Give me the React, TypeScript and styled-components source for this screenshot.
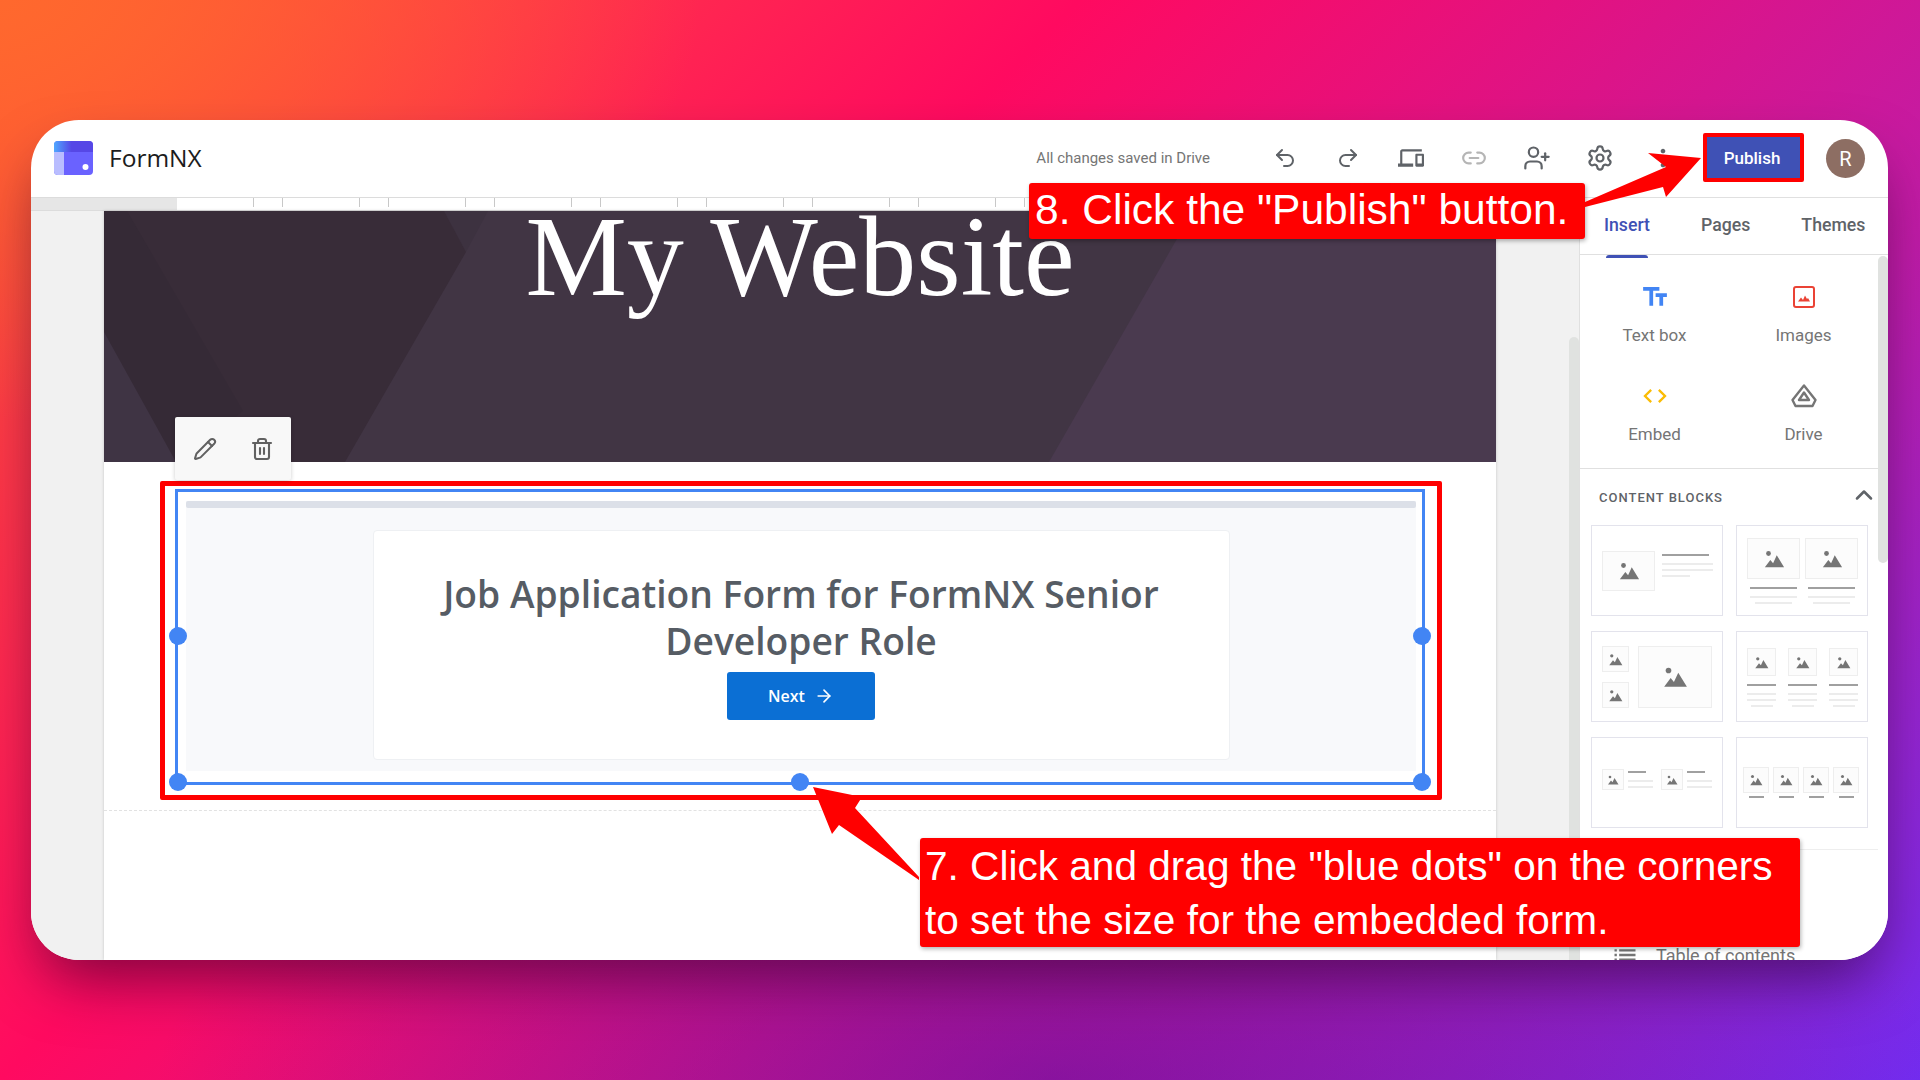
import styled, { createGlobalStyle } from "styled-components";
import { Undo2, Redo2, Link2, UserPlus, Settings, Pencil, Trash2, ChevronUp, ArrowRight } from "lucide-react";
import { MdDevices, MdTextFields, MdCode, MdList, MdMoreVert } from "react-icons/md";

const GlobalStyle = createGlobalStyle`
  html, body { margin: 0; padding: 0; }
  body { font-family: Roboto, "Liberation Sans", sans-serif; }
  * { box-sizing: border-box; }
`;

const Stage = styled.div`
  width: 1920px;
  height: 1080px;
  overflow: hidden;
  position: relative;
  padding: 120px 32px 120px 31px;
  background:
    radial-gradient(ellipse 700px 420px at 0% 0%, rgba(255,105,45,0.95), rgba(255,105,45,0) 100%),
    radial-gradient(ellipse 900px 320px at 55% 100%, rgba(80,10,150,0.5), rgba(80,10,150,0) 100%),
    linear-gradient(135deg, #ff5a35 0%, #ff0a60 36%, #c01ca8 72%, #732cf0 100%);
`;

const Window = styled.div`
  width: 100%;
  height: 100%;
  background: #fff;
  border-radius: 48px;
  overflow: hidden;
  display: flex;
  flex-direction: column;
  box-shadow: 0 30px 60px -12px rgba(40, 0, 40, 0.6);
`;

const TopBar = styled.header`
  height: 77px;
  flex: none;
  display: flex;
  align-items: center;
  padding: 0 0 2px 23px;
`;

const BrandName = styled.span`
  margin-left: 16px;
  font-family: "Open Sans", sans-serif;
  font-size: 24.5px;
  color: #1c1c1c;
`;

const SaveStatus = styled.span`
  margin-left: auto;
  padding-top: 1px;
  font-size: 15px;
  color: #757575;
`;

const IconRow = styled.div`
  display: flex;
  align-items: center;
  margin-left: 59px;
  gap: 31px;
`;

const ToolIcon = styled.span<{ $muted?: boolean }>`
  width: 32px;
  height: 32px;
  display: flex;
  align-items: center;
  justify-content: center;
  color: ${(p) => (p.$muted ? "#b5b5b5" : "#5f6368")};
`;

const PublishButton = styled.button`
  width: 101px;
  height: 49px;
  margin-left: 24px;
  padding: 0 3px 0 0;
  background: #3f51b5;
  border: 4px solid #f00;
  border-radius: 2px;
  color: #fff;
  font: 500 17px Roboto, sans-serif;
`;

const Avatar = styled.span`
  width: 39px;
  height: 39px;
  margin: 2px 23px 0 22px;
  border-radius: 50%;
  background: #8d6e63;
  color: #fff;
  font-size: 20px;
  display: flex;
  align-items: center;
  justify-content: center;
`;

const Body = styled.div`
  flex: 1;
  min-height: 0;
  display: flex;
`;

const Main = styled.main`
  flex: 1;
  min-width: 0;
  display: flex;
  flex-direction: column;
  background: #f1f1f1;
`;

const Ruler = styled.div`
  height: 14px;
  flex: none;
  border-top: 1px solid #dcdcdc;
  border-bottom: 1px solid #dcdcdc;
  background: linear-gradient(90deg, #e6e6e6 146px, #fff 146px);
  display: flex;
  padding-left: 146px;
  overflow: hidden;
`;

const RulerTick = styled.span`
  width: 106px;
  height: 9px;
  flex: none;
  background:
    linear-gradient(#c8c8c8, #c8c8c8) 76px 0 / 1px 100% no-repeat,
    linear-gradient(#c8c8c8, #c8c8c8) 105px 0 / 1px 100% no-repeat;
`;

const Canvas = styled.div`
  flex: 1;
  min-height: 0;
  display: flex;
  padding-left: 73px;
`;

const Page = styled.div`
  width: 1392px;
  flex: none;
  background: #fff;
  box-shadow: 0 0 3px rgba(0, 0, 0, 0.18);
`;

const Banner = styled.div`
  height: 251px;
  position: relative;
  background: #413544;
  display: flex;
  justify-content: center;
`;

const BannerArt = styled.svg`
  position: absolute;
  inset: 0;
`;

const BannerTitle = styled.h1`
  position: relative;
  margin: 0;
  font-family: "Liberation Serif", serif;
  font-weight: 400;
  font-size: 114px;
  line-height: 91px;
  color: #fff;
`;

const PageBody = styled.div`
  padding: 19px 54px 0 56px;
`;

const FloatingTools = styled.div`
  position: absolute;
  left: 175px;
  top: 417px;
  width: 116px;
  height: 63px;
  background: #f8f8f8;
  border-radius: 2px;
  box-shadow: 0 1px 4px rgba(0, 0, 0, 0.2);
  color: #616161;
  display: flex;
  align-items: center;
  justify-content: center;
  gap: 33px;
`;

const Highlight = styled.div`
  height: 319px;
  border: 5px solid #f00;
  border-radius: 2px;
  padding: 3px 12px 10px 10px;
`;

const Selection = styled.div`
  position: relative;
  height: 100%;
  border: 3px solid #4285f4;
  padding: 9px 6px 11px 8px;
`;

const Handle = styled.span<{ $x: string; $y: string }>`
  position: absolute;
  left: ${(p) => p.$x};
  top: ${(p) => p.$y};
  width: 18px;
  height: 18px;
  margin: -9px 0 0 -9px;
  border-radius: 50%;
  background: #4285f4;
`;

const FormFrame = styled.div`
  height: 100%;
  background: #f8f9fb;
`;

const FormProgress = styled.div`
  height: 7px;
  border-radius: 2px;
  background: #dce0e8;
`;

const FormCard = styled.div`
  width: 857px;
  height: 230px;
  margin: 22px auto 0;
  padding-top: 40px;
  background: #fff;
  border: 1px solid #eef0f3;
  border-radius: 4px;
  display: flex;
  flex-direction: column;
  align-items: center;
`;

const FormTitle = styled.h2`
  width: 740px;
  margin: 0;
  text-align: center;
  font-family: "Open Sans", sans-serif;
  font-weight: 600;
  font-size: 37.2px;
  line-height: 46.5px;
  color: #565c64;
`;

const NextButton = styled.button`
  width: 148px;
  height: 48px;
  margin-top: 8px;
  flex: none;
  border: none;
  border-radius: 3px;
  background: #0b6fd4;
  color: #fff;
  font: 600 16px "Open Sans", sans-serif;
  display: flex;
  align-items: center;
  justify-content: center;
  gap: 9px;
`;

const DashedRule = styled.div`
  margin: 10px -54px 0 -56px;
  border-top: 1px dashed #e2e2e2;
`;

const Rail = styled.div`
  width: 10px;
  flex: none;
  margin: 126px 0 0 73px;
  border-radius: 6px 6px 0 0;
  background: #e0e2e0;
`;

const Sidebar = styled.aside`
  width: 309px;
  flex: none;
  position: relative;
  background: #fff;
  border-top: 1px solid #e0e0e0;
  border-left: 1px solid #e0e0e0;
`;

const Tabs = styled.nav`
  height: 57px;
  display: flex;
  align-items: center;
  gap: 51px;
  padding: 0 0 3px 24px;
  border-bottom: 1px solid #e0e0e0;
`;

const Tab = styled.span<{ $active?: boolean }>`
  position: relative;
  font-size: 17.7px;
  font-weight: 500;
  color: ${(p) => (p.$active ? "#3f51b5" : "#5f6368")};

  &::after {
    content: "";
    display: ${(p) => (p.$active ? "block" : "none")};
    position: absolute;
    left: 2px;
    right: 2px;
    top: 40px;
    height: 3px;
    border-radius: 3px 3px 0 0;
    background: #3f51b5;
  }
`;

const SideScroll = styled.div`
  position: absolute;
  right: 0;
  top: 58px;
  width: 10px;
  height: 307px;
  border-radius: 6px;
  background: #e0e2e0;
`;

const InsertGrid = styled.div`
  width: 298px;
  height: 214px;
  padding-top: 28px;
  display: grid;
  grid-template-columns: 1fr 1fr;
  grid-auto-rows: 99px;
  border-bottom: 1px solid #e0e0e0;
`;

const InsertItem = styled.div`
  display: flex;
  flex-direction: column;
  align-items: center;
  gap: 14px;
  font-size: 17px;
  line-height: 20px;
  color: #757575;
`;

const InsertIcon = styled.span<{ $color: string }>`
  height: 28px;
  display: flex;
  align-items: center;
  color: ${(p) => p.$color};
`;

const SectionHead = styled.div`
  width: 298px;
  height: 56px;
  padding-left: 19px;
  display: flex;
  align-items: center;
  justify-content: space-between;
  font-size: 13px;
  font-weight: 500;
  letter-spacing: 1px;
  color: #5f6368;

  svg {
    margin-top: -5px;
  }
`;

const BlockGrid = styled.div`
  padding-left: 11px;
  width: 298px;
  display: grid;
  grid-template-columns: 132px 132px;
  grid-auto-rows: 91px;
  column-gap: 13px;
  row-gap: 15px;
`;

const BlockCard = styled.div<{ $pad: string; $gap: number }>`
  border: 1px solid #e3e3ec;
  padding: ${(p) => p.$pad};
  display: flex;
  gap: ${(p) => p.$gap}px;
  align-items: flex-start;
`;

const Stack = styled.div<{ $w?: number; $gap?: number; $center?: boolean; $top?: number }>`
  width: ${(p) => (p.$w ? `${p.$w}px` : "auto")};
  margin-top: ${(p) => p.$top ?? 0}px;
  flex: none;
  display: flex;
  flex-direction: column;
  gap: ${(p) => p.$gap ?? 4}px;
  align-items: ${(p) => (p.$center ? "center" : "flex-start")};
`;

const Thumb = styled.span<{ $w: number; $h: number; $below?: number }>`
  width: ${(p) => p.$w}px;
  height: ${(p) => p.$h}px;
  margin-bottom: ${(p) => p.$below ?? 0}px;
  flex: none;
  border: 1px solid #eeeeee;
  background: #fcfcfc;
  display: flex;
  align-items: center;
  justify-content: center;
`;

const Bar = styled.span<{ $w: number; $dark?: boolean }>`
  width: ${(p) => p.$w}px;
  height: 2px;
  flex: none;
  margin-bottom: ${(p) => (p.$dark ? 3 : 0)}px;
  background: ${(p) => (p.$dark ? "#a0a0a0" : "#ececec")};
`;

const TocRow = styled.div`
  position: absolute;
  left: 31px;
  bottom: -9px;
  display: flex;
  align-items: center;
  gap: 17px;
  font-size: 18px;
  color: #757575;
`;

const BlockRule = styled.div`
  width: 298px;
  margin-top: 21px;
  border-top: 1px solid #eeeeee;
`;

const Callout = styled.div`
  position: absolute;
  background: #f00;
  color: #fff;
  border-radius: 3px;
  box-shadow: 1px 2px 4px rgba(0, 0, 0, 0.3);
  font-family: "Liberation Sans", sans-serif;
  line-height: 54px;
  white-space: nowrap;
`;

const PublishCallout = styled(Callout)`
  left: 1029px;
  top: 183px;
  width: 556px;
  height: 56px;
  padding-left: 6px;
  font-size: 42.5px;
`;

const ResizeCallout = styled(Callout)`
  left: 920px;
  top: 838px;
  width: 880px;
  height: 109px;
  padding: 1px 0 0 5px;
  font-size: 40.6px;
`;

const ArrowLayer = styled.svg`
  position: absolute;
  inset: 0;
  pointer-events: none;
`;

function Mountain({ size }: { size: number }) {
  return (
    <svg width={size} height={size} viewBox="0 0 24 24" fill="#757575">
      <circle cx="6" cy="6" r="2.6" />
      <path d="M2 21l6-8 3 3.5L15 8l8 13z" />
    </svg>
  );
}

function Logo() {
  return (
    <svg width="39" height="34" viewBox="0 0 39 34">
      <defs>
        <linearGradient id="logoTop" x1="0" y1="0" x2="1" y2="0">
          <stop offset="0" stopColor="#4fa8ff" />
          <stop offset="0.45" stopColor="#5647e6" />
          <stop offset="1" stopColor="#5647e6" />
        </linearGradient>
      </defs>
      <rect width="39" height="34" rx="4" fill="#6a62ff" />
      <path d="M4 0h31a4 4 0 0 1 4 4v7H0V4a4 4 0 0 1 4-4z" fill="url(#logoTop)" />
      <path d="M0 11h10v23H4a4 4 0 0 1-4-4z" fill="#b9bdff" />
      <circle cx="31.500" cy="26" r="3" fill="#fff" />
    </svg>
  );
}

function ImagesIcon() {
  return (
    <svg width="24" height="24" viewBox="0 0 24 24" fill="none">
      <rect x="2" y="2" width="20" height="20" rx="2" stroke="#ea4335" strokeWidth="2" />
      <path d="M6 16.500l3-4 2 2.500 2-4.500 2 3.500 1-1 2 3.500z" fill="#ea4335" />
    </svg>
  );
}

function DriveIcon() {
  return (
    <svg width="28" height="26" viewBox="0 0 28 26" fill="none" stroke="#757575">
      <path d="M14 2.500L25.500 17l-3 6h-17l-3-6z" strokeWidth="2.400" strokeLinejoin="round" />
      <path d="M14 9.500l5 7.500H9z" strokeWidth="2.400" strokeLinejoin="round" />
    </svg>
  );
}

function App() {
  return (
    <Stage>
      <GlobalStyle />
      <Window>
        <TopBar>
          <Logo />
          <BrandName>FormNX</BrandName>
          <SaveStatus>All changes saved in Drive</SaveStatus>
          <IconRow>
            <ToolIcon><Undo2 size={24} strokeWidth={2} /></ToolIcon>
            <ToolIcon><Redo2 size={24} strokeWidth={2} /></ToolIcon>
            <ToolIcon><MdDevices size={26} /></ToolIcon>
            <ToolIcon $muted><Link2 size={26} strokeWidth={2} /></ToolIcon>
            <ToolIcon><UserPlus size={28} strokeWidth={1.9} /></ToolIcon>
            <ToolIcon><Settings size={28} strokeWidth={1.9} /></ToolIcon>
            <ToolIcon><MdMoreVert size={28} /></ToolIcon>
          </IconRow>
          <PublishButton>Publish</PublishButton>
          <Avatar>R</Avatar>
        </TopBar>
        <Body>
          <Main>
            <Ruler>
              {Array.from({ length: 13 }).map((_, i) => (
                <RulerTick key={i} />
              ))}
            </Ruler>
            <Canvas>
              <Page>
                <Banner>
                  <BannerArt width="1392" height="251" viewBox="0 0 1392 251">
                    <polygon points="340,0 384,0 362,41" fill="#3d3240" />
                    <polygon points="0,0 340,0 362,41 241,251 0,251" fill="#382c38" />
                    <polygon points="0,0 23,0 139,200 72,251 0,121" fill="#352a36" />
                    <polygon points="0,121 72,251 0,251" fill="#3f3444" />
                    <polygon points="1089,0 1392,0 1392,251 945,251" fill="#4a3a4f" />
                  </BannerArt>
                  <BannerTitle>My Website</BannerTitle>
                </Banner>
                <PageBody>
                  <Highlight>
                    <Selection>
                      <FormFrame>
                        <FormProgress />
                        <FormCard>
                          <FormTitle>Job Application Form for FormNX Senior Developer Role</FormTitle>
                          <NextButton>Next <ArrowRight size={20} /></NextButton>
                        </FormCard>
                      </FormFrame>
                      <Handle $x="0" $y="144px" />
                      <Handle $x="0" $y="100%" />
                      <Handle $x="50%" $y="100%" />
                      <Handle $x="100%" $y="100%" />
                      <Handle $x="100%" $y="144px" />
                    </Selection>
                  </Highlight>
                  <DashedRule />
                </PageBody>
              </Page>
              <Rail />
            </Canvas>
          </Main>
          <Sidebar>
            <Tabs>
              <Tab $active>Insert</Tab>
              <Tab>Pages</Tab>
              <Tab>Themes</Tab>
            </Tabs>
            <SideScroll />
            <InsertGrid>
              <InsertItem><InsertIcon $color="#4285f4"><MdTextFields size={30} /></InsertIcon>Text box</InsertItem>
              <InsertItem><InsertIcon $color="#ea4335"><ImagesIcon /></InsertIcon>Images</InsertItem>
              <InsertItem><InsertIcon $color="#fbbc04"><MdCode size={28} /></InsertIcon>Embed</InsertItem>
              <InsertItem><InsertIcon $color="#757575"><DriveIcon /></InsertIcon>Drive</InsertItem>
            </InsertGrid>
            <SectionHead>CONTENT BLOCKS <ChevronUp size={28} strokeWidth={2.2} /></SectionHead>
            <BlockGrid>
              <BlockCard $pad="25px 10px" $gap={7}>
                <Thumb $w={53} $h={40}><Mountain size={22} /></Thumb>
                <Stack $top={3} $w={51}>
                  <Bar $w={47} $dark /><Bar $w={51} /><Bar $w={51} /><Bar $w={28} />
                </Stack>
              </BlockCard>
              <BlockCard $pad="12px 10px" $gap={5}>
                {[0, 1].map((i) => (
                  <Stack key={i} $w={53} $center>
                    <Thumb $w={53} $h={41} $below={4}><Mountain size={22} /></Thumb>
                    <Bar $w={47} $dark /><Bar $w={47} /><Bar $w={37} />
                  </Stack>
                ))}
              </BlockCard>
              <BlockCard $pad="14px 10px" $gap={9}>
                <Stack $gap={10}>
                  <Thumb $w={27} $h={26}><Mountain size={15} /></Thumb>
                  <Thumb $w={27} $h={26}><Mountain size={15} /></Thumb>
                </Stack>
                <Thumb $w={74} $h={62}><Mountain size={26} /></Thumb>
              </BlockCard>
              <BlockCard $pad="16px 10px" $gap={12}>
                {[0, 1, 2].map((i) => (
                  <Stack key={i} $w={29} $center>
                    <Thumb $w={29} $h={28} $below={4}><Mountain size={15} /></Thumb>
                    <Bar $w={29} $dark /><Bar $w={29} /><Bar $w={29} /><Bar $w={22} />
                  </Stack>
                ))}
              </BlockCard>
              <BlockCard $pad="31px 10px" $gap={4}>
                <Thumb $w={22} $h={21}><Mountain size={12} /></Thumb>
                <Stack $top={2} $w={29}><Bar $w={18} $dark /><Bar $w={25} /><Bar $w={25} /></Stack>
                <Thumb $w={22} $h={21}><Mountain size={12} /></Thumb>
                <Stack $top={2} $w={25}><Bar $w={18} $dark /><Bar $w={25} /><Bar $w={25} /></Stack>
              </BlockCard>
              <BlockCard $pad="29px 6px" $gap={4}>
                {[0, 1, 2, 3].map((i) => (
                  <Stack key={i} $gap={3} $w={26} $center>
                    <Thumb $w={26} $h={26}><Mountain size={14} /></Thumb>
                    <Bar $w={15} $dark />
                  </Stack>
                ))}
              </BlockCard>
            </BlockGrid>
            <BlockRule />
            <TocRow><MdList size={28} />Table of contents</TocRow>
          </Sidebar>
        </Body>
      </Window>

      <FloatingTools>
        <Pencil size={24} strokeWidth={2} />
        <Trash2 size={24} strokeWidth={2.1} />
      </FloatingTools>
      <PublishCallout>8. Click the "Publish" button.</PublishCallout>
      <ResizeCallout>
        7. Click and drag the "blue dots" on the corners
        <br />
        to set the size for the embedded form.
      </ResizeCallout>
      <ArrowLayer width="1920" height="1080" viewBox="0 0 1920 1080">
        <polygon points="1585,202 1666,167 1648,153 1701,158 1666,197 1663,187 1585,207" fill="#f00" />
        <polygon points="813,787 862,797 855,808 919,877 919,880 839,825 832,834" fill="#f00" />
      </ArrowLayer>
    </Stage>
  );
}

export default App;
